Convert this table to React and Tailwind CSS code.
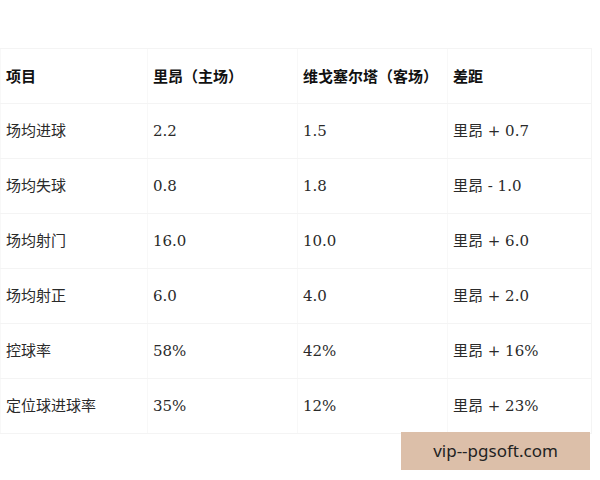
const header = ["项目", "里昂（主场）", "维戈塞尔塔（客场）", "差距"];

const rows = [
  ["场均进球", "2.2", "1.5", "里昂 + 0.7"],
  ["场均失球", "0.8", "1.8", "里昂 - 1.0"],
  ["场均射门", "16.0", "10.0", "里昂 + 6.0"],
  ["场均射正", "6.0", "4.0", "里昂 + 2.0"],
  ["控球率", "58%", "42%", "里昂 + 16%"],
  ["定位球进球率", "35%", "12%", "里昂 + 23%"],
];

const cols = "grid grid-cols-[147px_150px_150px_145px]";

export default function App() {
  return (
    <div className="w-[600px] h-[480px] bg-white pt-[48px] font-['DejaVu_Serif','Noto_Sans_CJK_SC',serif] text-[15px] text-[#2a2a2a]">
      <div className="w-[592px] border-t border-r border-[#f4f4f4]">
        <div className={`${cols} h-[55px] border-b border-[#f4f4f4]`}>
          {header.map((h, i) => (
            <div
              key={i}
              className="flex items-center pl-[5px] border-l border-[#f8f8f8] font-bold font-['Noto_Sans_CJK_SC',sans-serif] text-[#111]"
            >
              {h}
            </div>
          ))}
        </div>
        {rows.map((r, ri) => (
          <div key={ri} className={`${cols} h-[55px] border-b border-[#f4f4f4]`}>
            {r.map((c, ci) => (
              <div key={ci} className="flex items-center pl-[5px] border-l border-[#f8f8f8]">
                {c}
              </div>
            ))}
          </div>
        ))}
      </div>
      <div className="flex justify-end pr-[10px] -mt-[2px]">
        <div className="w-[189px] h-[38px] bg-[#dcbfa9] flex items-center justify-center font-['Noto_Sans',sans-serif] text-[17px] text-[#222]">
          vip--pgsoft.com
        </div>
      </div>
    </div>
  );
}
